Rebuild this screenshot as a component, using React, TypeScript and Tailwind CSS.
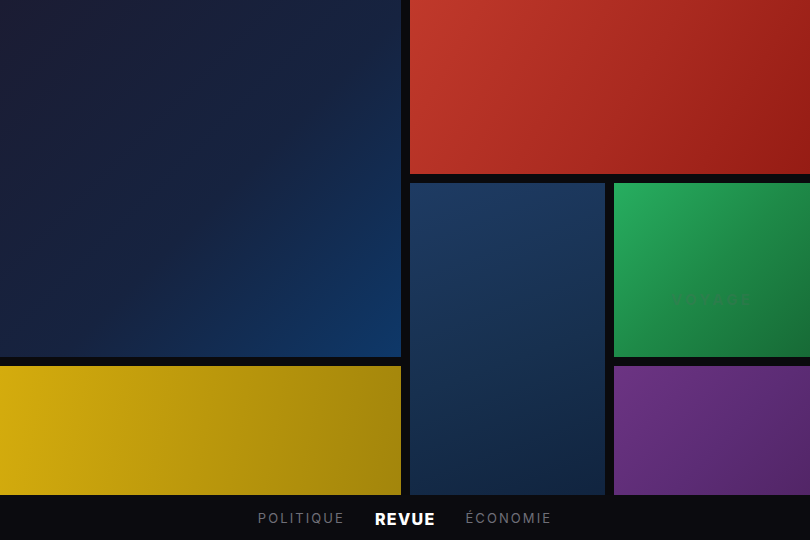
import React from "react";

const NAV = [
  { label: "POLITIQUE", active: false },
  { label: "REVUE", active: true },
  { label: "ÉCONOMIE", active: false },
];

export default function App() {
  return (
    <div className="relative h-[540px] w-[810px] overflow-hidden bg-[#0a0a0d] font-['Inter',sans-serif]">
      <div className="grid h-full grid-cols-4 grid-rows-3 gap-[9px]">
        <div className="col-span-2 row-span-2 bg-[linear-gradient(135deg,#1b1c33_0%,#162340_55%,#0e3869_100%)]" />
        <div className="col-span-2 bg-[linear-gradient(120deg,#c0392b_0%,#aa2a20_55%,#961c14_100%)]" />
        <div className="row-span-2 bg-[linear-gradient(160deg,#1e3b63_0%,#17304f_50%,#0f213b_100%)]" />
        <div className="flex items-start justify-center bg-[linear-gradient(135deg,#27ae60_0%,#1e8a48_50%,#176a36_100%)] pt-[106px]">
          <span className="text-[15px] font-bold tracking-[0.22em] text-[#5a6a62]/25">
            VOYAGE
          </span>
        </div>
        <div className="col-span-2 bg-[linear-gradient(100deg,#d4ac0d_0%,#bb980c_50%,#a2850c_100%)]" />
        <div className="bg-[linear-gradient(135deg,#6c3483_0%,#5c2c75_50%,#4f2362_100%)]" />
      </div>
      <nav className="absolute bottom-0 left-0 right-0 flex h-[45px] items-center justify-center gap-[30px] bg-[#0b0b0f] pt-[3px]">
        {NAV.map((n) =>
          n.active ? (
            <span key={n.label} className="text-[16px] font-extrabold tracking-[0.08em] text-white">
              {n.label}
            </span>
          ) : (
            <span key={n.label} className="text-[13px] font-normal tracking-[0.16em] text-[#6f6f78]">
              {n.label}
            </span>
          )
        )}
      </nav>
    </div>
  );
}
